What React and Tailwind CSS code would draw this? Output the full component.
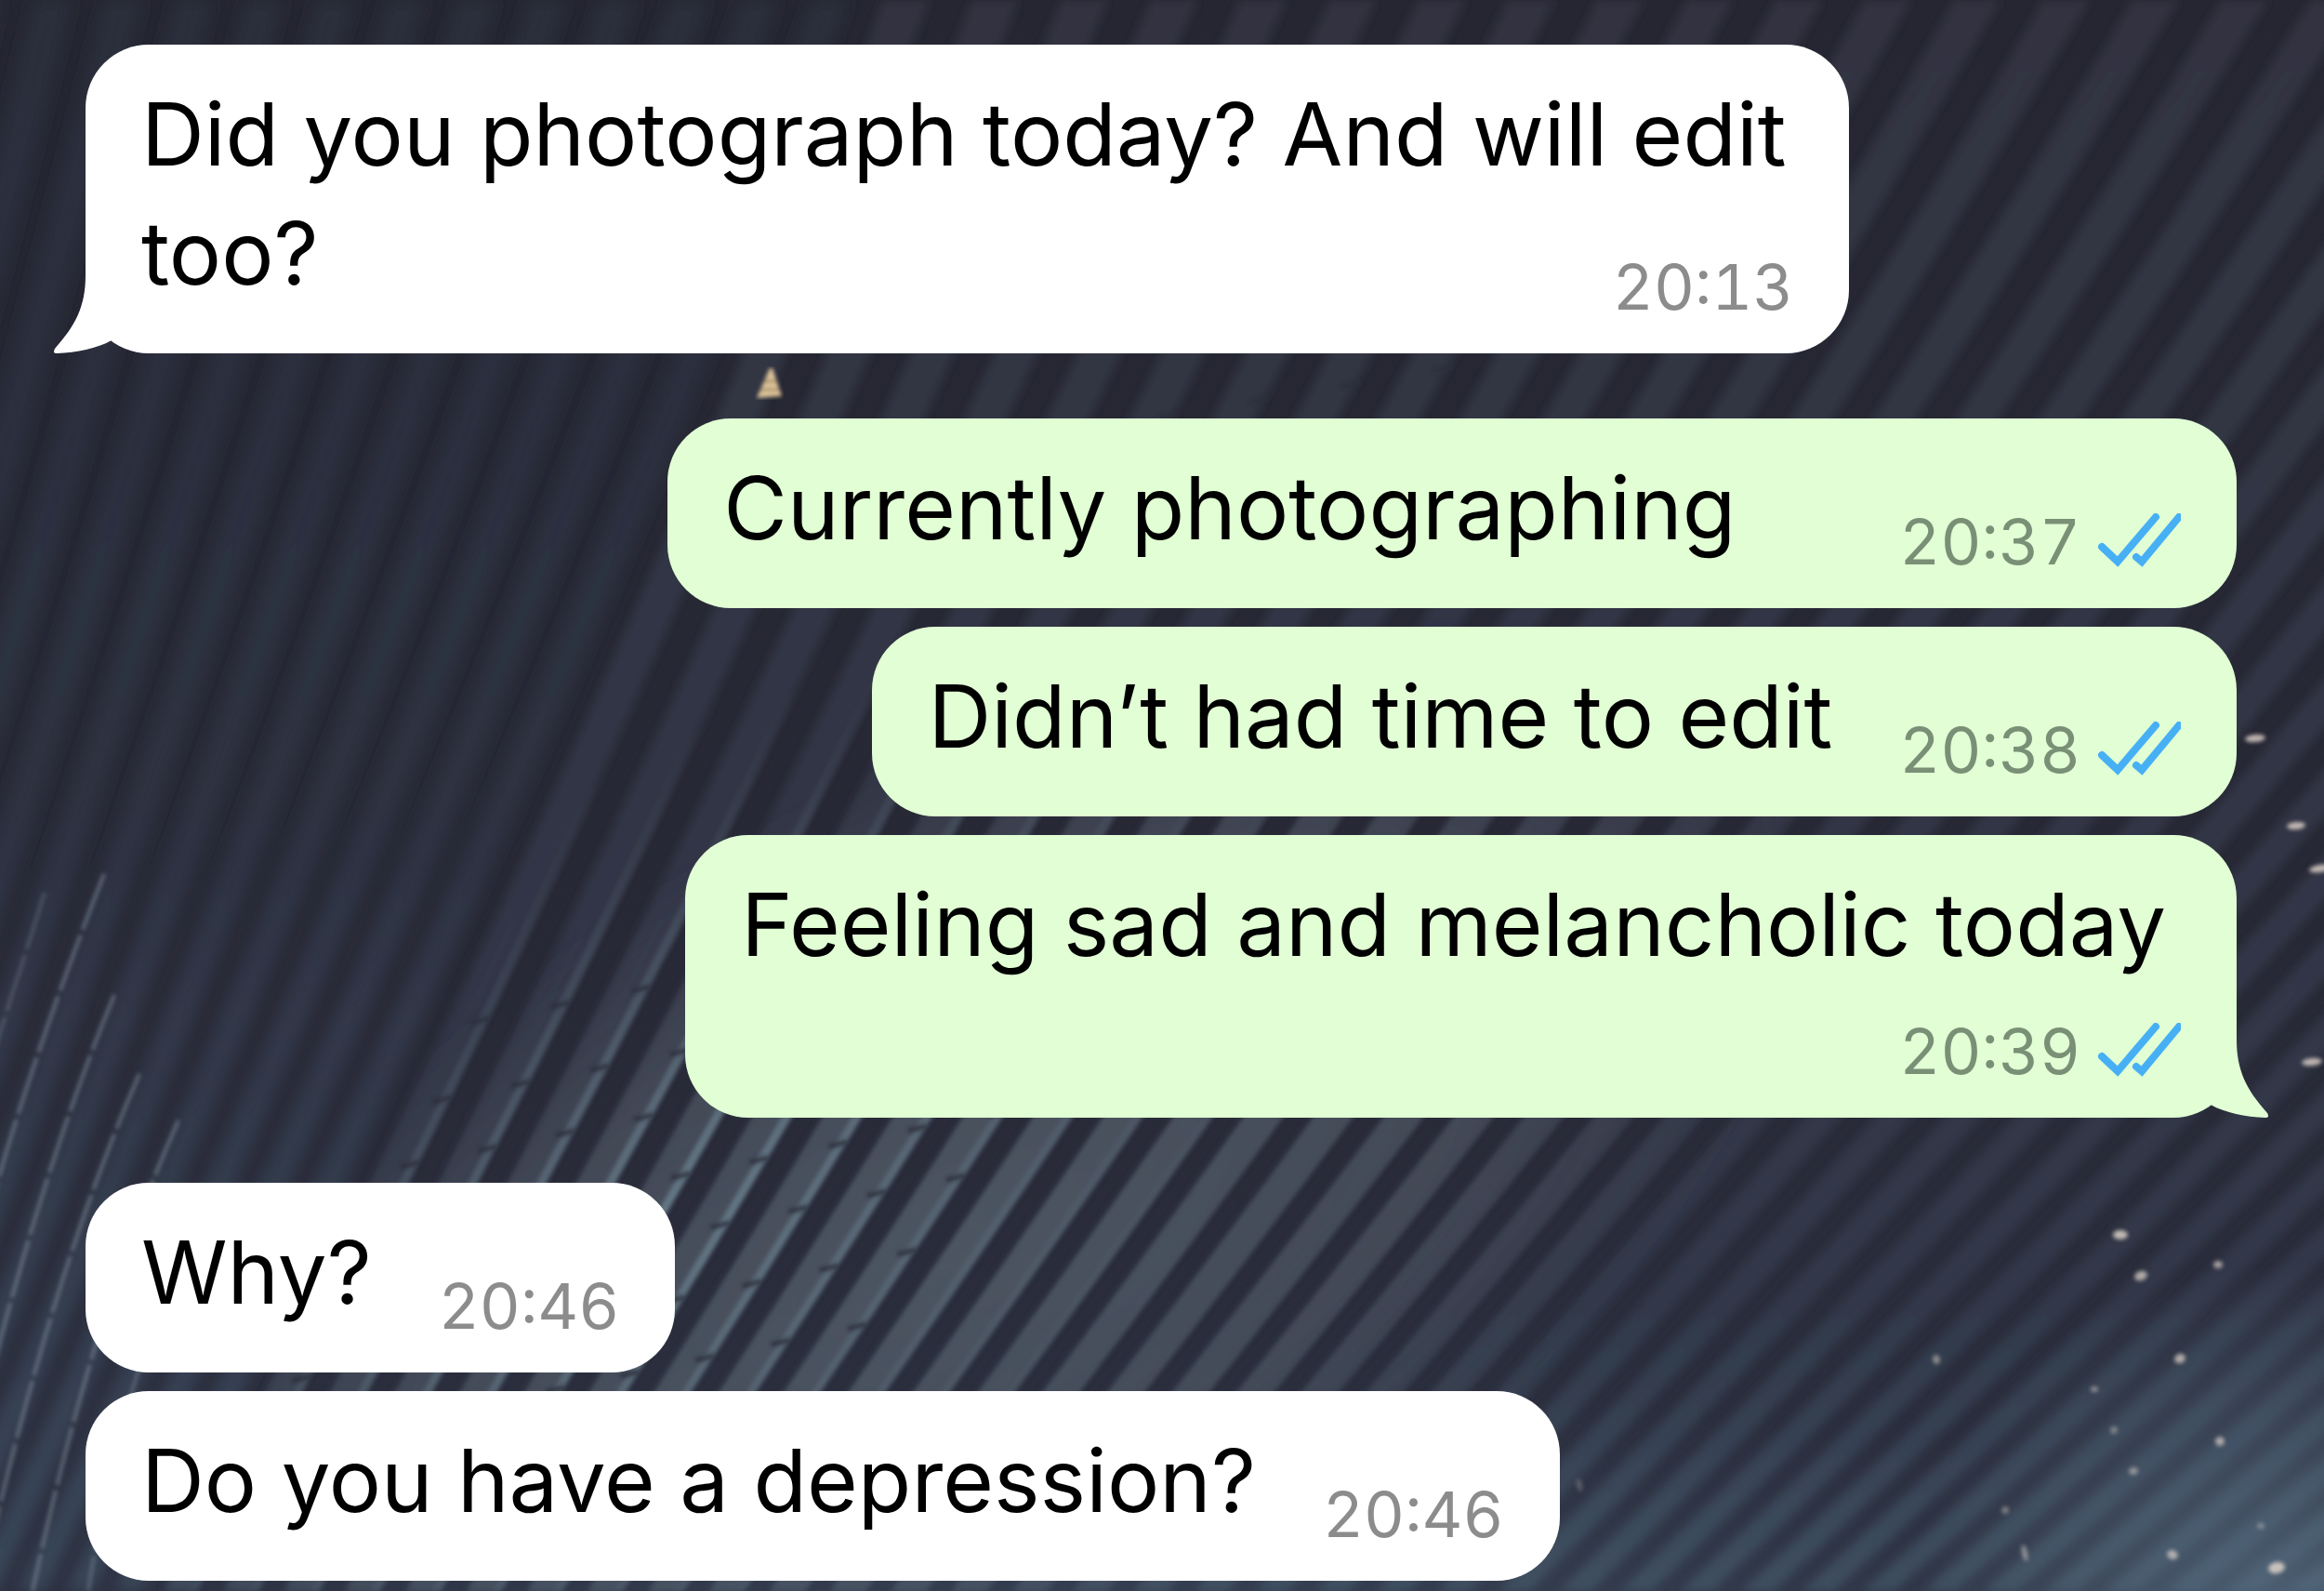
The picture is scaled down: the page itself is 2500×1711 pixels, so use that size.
import React from "react";
import clsx from "clsx";

const messages = [
  { id: 1, text: "Did you photograph today? And will edit too?", time: "20:13", tail: true },
  { id: 2, text: "Currently photographing", time: "20:37", mine: true, wide: true },
  { id: 3, text: "Didn’t had time to edit", time: "20:38", mine: true },
  { id: 4, text: "Feeling sad and melancholic today", time: "20:39", mine: true, stacked: true, tail: true },
  { id: 5, text: "Why?", time: "20:46" },
  { id: 6, text: "Do you have a depression?", time: "20:46" },
];

// [x, y, rx, ry, rotation, opacity]
const lights = [
  [2426, 794, 11, 4, -5, 0.8],
  [2470, 888, 10, 4, -5, 0.8],
  [2496, 934, 12, 4, -8, 0.8],
  [2487, 1142, 11, 4, -5, 0.8],
  [2281, 1328, 8, 5, 0, 0.8],
  [2303, 1372, 7, 5, -20, 0.7],
  [2386, 1360, 5, 4, 0, 0.65],
  [2083, 1462, 4, 5, -10, 0.5],
  [2345, 1461, 6, 5, -20, 0.7],
  [2253, 1494, 4, 3, 0, 0.5],
  [2274, 1538, 4, 4, 20, 0.4],
  [2388, 1550, 5, 5, 10, 0.65],
  [2295, 1582, 5, 4, -10, 0.5],
  [2157, 1624, 4, 4, 0, 0.4],
  [2178, 1670, 3, 9, -12, 0.5],
  [2432, 1641, 4, 3, 0, 0.4],
  [2337, 1672, 6, 5, 20, 0.65],
  [2449, 1686, 9, 6, -10, 0.8],
  [1699, 1597, 3, 7, -12, 0.25],
];

const H = 1711;
const WALL_STEP = 76;
const ROOF_STEP = 96;

// The ribs lean further over and draw closer together towards the bottom
const ribEnd = (a) => 0.68 * a - 470;
const ribMid = (a) => a - 0.42 * (a - ribEnd(a));

const ribX = (a, y) => {
  const t = y / H;
  return (1 - t) * (1 - t) * a + 2 * t * (1 - t) * ribMid(a) + t * t * ribEnd(a);
};

const ribPath = (a, width) => {
  const b = a + width;
  return `M${a} 0Q${ribMid(a)} ${H / 2} ${ribEnd(a)} ${H}H${ribEnd(b)}Q${ribMid(b)} ${H / 2} ${b} 0Z`;
};

const wallRibs = Array.from({ length: 13 }, (_, i) => -40 + i * WALL_STEP);
const roofRibs = Array.from({ length: 40 }, (_, i) => 950 + i * ROOF_STEP);

const Wallpaper = () => (
  <svg
    className="absolute inset-0 h-full w-full"
    viewBox="0 0 2500 1711"
    preserveAspectRatio="xMidYMid slice"
    aria-hidden="true"
  >
    <defs>
      <linearGradient id="base" x1="0" y1="0" x2="0" y2="1">
        <stop offset="0" stopColor="#252631" />
        <stop offset="0.6" stopColor="#282936" />
        <stop offset="1" stopColor="#2c3040" />
      </linearGradient>
      <linearGradient id="wall" gradientUnits="userSpaceOnUse" x1="0" y1="0" x2="0" y2="1711">
        <stop offset="0" stopColor="#2b2d3b" />
        <stop offset="0.5" stopColor="#2d3141" />
        <stop offset="1" stopColor="#3a4759" />
      </linearGradient>
      <linearGradient id="roof" gradientUnits="userSpaceOnUse" x1="0" y1="0" x2="0" y2="1711">
        <stop offset="0" stopColor="#313341" />
        <stop offset="0.5" stopColor="#333645" />
        <stop offset="0.8" stopColor="#303748" />
        <stop offset="1" stopColor="#3b495a" />
      </linearGradient>
      <radialGradient
        id="shine"
        gradientUnits="userSpaceOnUse"
        cx="0"
        cy="0"
        r="1"
        gradientTransform="translate(1020 1340) rotate(-30) scale(1050 500)"
      >
        <stop offset="0" stopColor="#4f5965" stopOpacity="0.9" />
        <stop offset="0.6" stopColor="#494f5c" stopOpacity="0.75" />
        <stop offset="1" stopColor="#434755" stopOpacity="0" />
      </radialGradient>
      <radialGradient
        id="edge"
        gradientUnits="userSpaceOnUse"
        cx="0"
        cy="0"
        r="1"
        gradientTransform="translate(740 1300) rotate(-40) scale(800 440)"
      >
        <stop offset="0" stopColor="#708895" stopOpacity="0.75" />
        <stop offset="1" stopColor="#5c6f80" stopOpacity="0" />
      </radialGradient>
      <radialGradient id="corner" gradientUnits="userSpaceOnUse" cx="2450" cy="1760" r="400">
        <stop offset="0" stopColor="#5b7388" stopOpacity="0.75" />
        <stop offset="1" stopColor="#5b7388" stopOpacity="0" />
      </radialGradient>
      <radialGradient
        id="floor"
        gradientUnits="userSpaceOnUse"
        cx="0"
        cy="0"
        r="1"
        gradientTransform="translate(1300 1790) scale(1300 300)"
      >
        <stop offset="0" stopColor="#4a6076" stopOpacity="0.4" />
        <stop offset="1" stopColor="#4a6076" stopOpacity="0" />
      </radialGradient>
      <filter id="soft" x="-5%" y="-5%" width="110%" height="110%">
        <feGaussianBlur stdDeviation="8" />
      </filter>
      <filter id="medium" x="-5%" y="-5%" width="110%" height="110%">
        <feGaussianBlur stdDeviation="5" />
      </filter>
      <filter id="fine" x="-5%" y="-5%" width="110%" height="110%">
        <feGaussianBlur stdDeviation="2" />
      </filter>
    </defs>

    <rect width="2500" height="1711" fill="url(#base)" />

    <g filter="url(#soft)">
      {wallRibs.map((a) => (
        <path key={a} d={ribPath(a, WALL_STEP * 0.55)} fill="url(#wall)" />
      ))}
    </g>
    <g filter="url(#medium)">
      {roofRibs.map((a) => (
        <path key={a} d={ribPath(a, ROOF_STEP * 0.52)} fill="url(#roof)" />
      ))}
    </g>
    <g filter="url(#fine)">
      {roofRibs.slice(0, 22).map((a) => (
        <path key={a} d={ribPath(a, ROOF_STEP * 0.56)} fill="url(#shine)" />
      ))}
      {roofRibs.slice(0, 20).map((a) => (
        <path key={a} d={ribPath(a + ROOF_STEP * 0.42, ROOF_STEP * 0.14)} fill="url(#edge)" />
      ))}
    </g>

    {/* joints between the panels */}
    <g filter="url(#fine)" stroke="#2a2d3b" strokeWidth="5" strokeOpacity="0.85">
      {roofRibs.slice(0, 9).flatMap((a, i) =>
        [530, 600, 1095, 1180, 1250, 1330, 1400, 1480, 1560, 1640].map((y) => {
          const top = y - i * 17;
          const right = ribX(a + ROOF_STEP * 0.56, top);
          return <path key={`${a}-${y}`} d={`M${right - 20} ${top + 5}L${right} ${top}`} />;
        })
      )}
    </g>

    {/* thin highlights on the left wall */}
    <g
      filter="url(#fine)"
      fill="none"
      stroke="#7d8b97"
      strokeWidth="4"
      strokeOpacity="0.6"
      strokeDasharray="64 6"
    >
      <path d="M48 960Q10 1080 -10 1140" strokeOpacity="0.35" />
      <path d="M112 940Q-10 1250 -60 1500" />
      <path d="M123 1070Q40 1270 -30 1560" />
      <path d="M150 1155Q60 1360 -10 1660" />
      <path d="M192 1205Q100 1410 35 1711" />
      <path d="M150 1470Q115 1580 95 1711" strokeOpacity="0.45" />
    </g>

    <rect width="2500" height="1711" fill="url(#floor)" />
    <rect width="2500" height="1711" fill="url(#corner)" />

    <g filter="url(#fine)" fill="#e6d9cf">
      {lights.map(([x, y, rx, ry, angle, opacity]) => (
        <ellipse
          key={`${x}-${y}`}
          cx={x}
          cy={y}
          rx={rx}
          ry={ry}
          opacity={opacity}
          transform={`rotate(${angle} ${x} ${y})`}
        />
      ))}
    </g>
    <g filter="url(#fine)">
      <path d="M828 396L831 396L841 426L814 428Z" fill="#dcc298" />
      <path d="M822 410H836M818 419H838" stroke="#8a7050" strokeWidth="2" />
    </g>
  </svg>
);

const Tail = ({ mine }) => (
  <svg
    className={clsx(
      "absolute bottom-0 h-[84px] w-[104px]",
      mine ? "-right-9 -scale-x-100 fill-[#e1fed4]" : "-left-9 fill-white"
    )}
    viewBox="0 0 104 84"
    aria-hidden="true"
  >
    <path d="M36 0C36 34 25 54 3 79Q0 84 5 84C27 83 48 79 64 70L104 24V0Z" />
  </svg>
);

const ReadTicks = () => (
  <svg
    className="h-[60px] w-[92px]"
    viewBox="0 0 92 60"
    fill="none"
    stroke="#47b0f5"
    strokeWidth="8"
    strokeLinecap="round"
    role="img"
    aria-label="Read"
  >
    <path d="M7 36L24 52L65 4" />
    <path d="M44 47L50 52L90 4" />
  </svg>
);

const Stamp = ({ time, mine, className }) => (
  <span
    className={clsx(
      "flex h-16 items-center justify-end gap-4 text-[68px] leading-16 tabular-nums",
      mine ? "text-[#7a9076]" : "text-[#8c8c8c]",
      className
    )}
  >
    <time>{time}</time>
    {mine && <ReadTicks />}
  </span>
);

const Bubble = ({ text, time, mine, wide, stacked, tail }) => (
  <div
    className={clsx(
      "relative flow-root max-w-[82%] rounded-[68px] px-15 pt-8 pb-10",
      mine ? "bg-[#e1fed4]" : "bg-white"
    )}
  >
    {tail && <Tail mine={mine} />}
    {stacked ? (
      <>
        <p className="pr-4">{text}</p>
        <Stamp time={time} mine={mine} className="mt-10" />
      </>
    ) : (
      <p>
        {text}
        <Stamp
          time={time}
          mine={mine}
          className={clsx("float-right mt-17", wide ? "ml-44" : "ml-18")}
        />
      </p>
    )}
  </div>
);

const App = () => {
  return (
    <div className="relative min-h-screen overflow-hidden bg-[#292a38] font-['Inter',sans-serif]">
      <Wallpaper />

      <main className="relative pt-12 pr-[94px] pb-2 pl-23">
        <ul className="flex flex-col text-[94px] leading-[128px] text-black">
          {messages.map((message, i) => {
            const previous = messages[i - 1];
            const newSender = previous && previous.mine !== message.mine;
            return (
              <li
                key={message.id}
                className={clsx(
                  "flex",
                  message.mine ? "justify-end" : "justify-start",
                  i > 0 && (newSender ? "mt-[70px]" : "mt-5")
                )}
              >
                <Bubble {...message} />
              </li>
            );
          })}
        </ul>
      </main>
    </div>
  );
};

export default App;
